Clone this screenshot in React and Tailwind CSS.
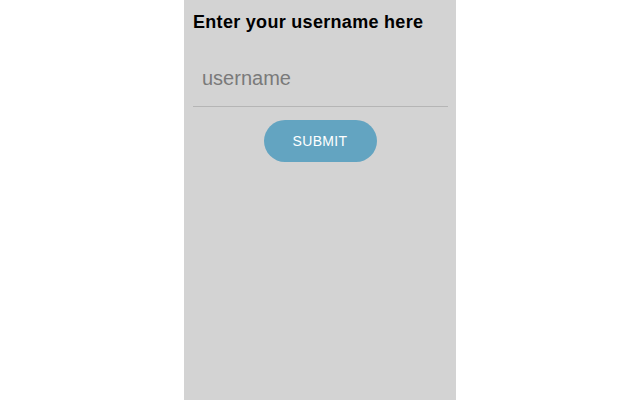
import React, { useState } from "react";

const App = () => {
  const [username, setUsername] = useState("");

  return (
    <div className="w-[640px] h-[400px] bg-white flex justify-center">
      <div className="w-[272px] h-full bg-[#d3d3d3] px-[9px] pt-[10px] font-['Liberation_Sans',sans-serif]">
        <h1 className="text-[18px] font-bold text-black leading-[24px] tracking-[0.3px]">Enter your username here</h1>
        <div className="mt-[16px] w-[255px] border-b border-[#b5b5b5]">
          <input
            type="text"
            value={username}
            onChange={(e) => setUsername(e.target.value)}
            placeholder="username"
            className="w-full h-[56px] bg-transparent px-[9px] text-[20px] text-[#333] placeholder:text-[#7a7a7a] outline-none"
          />
        </div>
        <div className="flex justify-center mt-[13px]">
          <button className="w-[113px] h-[42px] rounded-full bg-[#63a4c1] text-white text-[14px] font-medium tracking-wide">
            SUBMIT
          </button>
        </div>
      </div>
    </div>
  );
};

export default App;
